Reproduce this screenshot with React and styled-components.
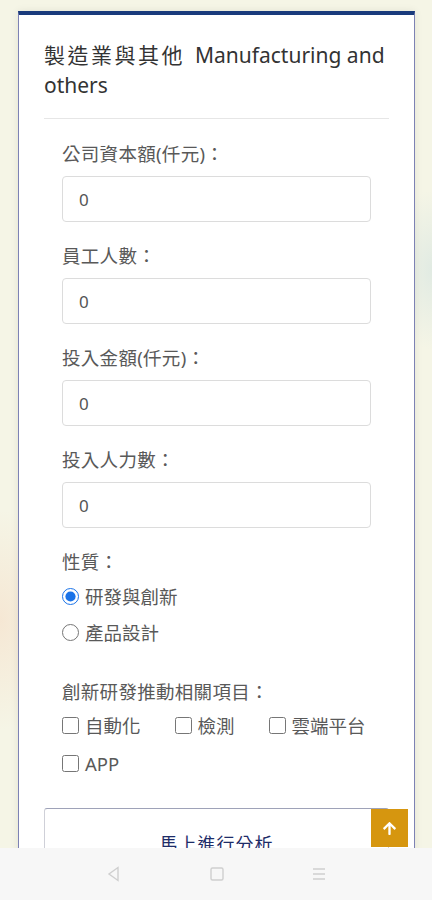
import React from "react";
import styled, { createGlobalStyle } from "styled-components";
import { FaArrowUp } from "react-icons/fa";

const GlobalStyle = createGlobalStyle`
  html, body {
    margin: 0;
    padding: 0;
  }
  body {
    background-color: #f5f5e6;
    background-image:
      radial-gradient(ellipse 60px 110px at 0px 620px, rgba(246, 222, 200, 0.6), transparent),
      radial-gradient(ellipse 40px 80px at 432px 270px, rgba(220, 232, 226, 0.8), transparent);
    font-family: "Noto Sans", "Noto Sans CJK TC", sans-serif;
  }
`;

const Page = styled.div`
  padding: 11px 17px 0 18px;
  min-height: 900px;
  box-sizing: border-box;
`;

const Card = styled.div`
  background: #fff;
  border: 1px solid #7d82b4;
  border-top: 4px solid #1a3b7c;
  box-shadow: 0 0 8px rgba(0, 0, 0, 0.08);
  padding: 25px 25px 40px;
`;

const Title = styled.h2`
  margin: 0;
  font-size: 21px;
  line-height: 30px;
  font-weight: 400;
  color: #333;
`;

const TitleZh = styled.span`
  letter-spacing: 2.5px;
  margin-right: 10px;
`;

const Divider = styled.hr`
  border: 0;
  border-top: 1px solid #e6e6e6;
  margin: 18px 0 0;
`;

const Form = styled.form`
  padding: 21px 18px 0;
  display: flex;
  flex-direction: column;
`;

const Group = styled.div`
  margin-bottom: ${(p) => p.$gap ?? 20}px;
`;

const Label = styled.div`
  font-size: 18.5px;
  line-height: 27px;
  letter-spacing: 0.3px;
  color: #595959;
`;

const Input = styled.input`
  display: block;
  box-sizing: border-box;
  width: 100%;
  height: 46px;
  margin-top: 9px;
  padding: 0 16px;
  border: 1px solid #dcdcdc;
  border-radius: 4px;
  font-family: inherit;
  font-size: 17px;
  color: #555;
  outline: none;
`;

const RadioList = styled.div`
  margin-top: 3px;
  display: flex;
  flex-direction: column;
`;

const Option = styled.label`
  display: flex;
  align-items: center;
  height: 36px;
  font-size: 18.5px;
  color: #595959;

  input {
    width: 17px;
    height: 17px;
    margin: 0 6px 0 0;
    accent-color: #1a73e8;
  }
`;

const CheckList = styled.div`
  margin-top: 2px;
  display: flex;
  flex-wrap: wrap;
  column-gap: 34px;
  row-gap: 2px;
`;

const AnalyzeButton = styled.button`
  display: block;
  width: 100%;
  height: 70px;
  margin-top: 27px;
  background: #fff;
  border: 1px solid #cfd0d8;
  border-top-color: #9ea2b8;
  border-radius: 3px;
  font-family: inherit;
  font-size: 18px;
  letter-spacing: 1px;
  color: #1e2c68;
`;

const TopButton = styled.button`
  position: fixed;
  right: 24px;
  bottom: 53px;
  width: 37px;
  height: 38px;
  border: 0;
  padding: 0;
  background: #d6960f;
  color: #fff;
  display: flex;
  align-items: center;
  justify-content: center;
  font-size: 15px;
`;

const NavBar = styled.div`
  position: fixed;
  left: 0;
  right: 0;
  bottom: 0;
  height: 52px;
  background: #f7f7f7;
  display: flex;
  align-items: center;
  justify-content: space-between;
  padding: 0 103px 0 104px;
  box-sizing: border-box;
`;

const NavIcon = styled.svg`
  width: 20px;
  height: 20px;
  fill: none;
  stroke: #cfcfcf;
  stroke-width: 1.4;
`;

const fields = ["公司資本額(仟元)：", "員工人數：", "投入金額(仟元)：", "投入人力數："];
const items = ["自動化", "檢測", "雲端平台", "APP"];

export default function App() {
  return (
    <>
      <GlobalStyle />
      <Page>
        <Card>
          <Title>
            <TitleZh>製造業與其他</TitleZh>Manufacturing and others
          </Title>
          <Divider />
          <Form onSubmit={(e) => e.preventDefault()}>
            {fields.map((f) => (
              <Group key={f}>
                <Label>{f}</Label>
                <Input defaultValue="0" />
              </Group>
            ))}
            <Group $gap={28}>
              <Label>性質：</Label>
              <RadioList>
                <Option>
                  <input type="radio" name="kind" defaultChecked />
                  研發與創新
                </Option>
                <Option>
                  <input type="radio" name="kind" />
                  產品設計
                </Option>
              </RadioList>
            </Group>
            <Group $gap={0}>
              <Label>創新研發推動相關項目：</Label>
              <CheckList>
                {items.map((i) => (
                  <Option key={i}>
                    <input type="checkbox" />
                    {i}
                  </Option>
                ))}
              </CheckList>
            </Group>
          </Form>
          <AnalyzeButton>馬上進行分析</AnalyzeButton>
        </Card>
      </Page>
      <TopButton aria-label="top">
        <FaArrowUp />
      </TopButton>
      <NavBar>
        <NavIcon viewBox="0 0 20 20">
          <path d="M14 3.5 L5 10 L14 16.5 Z" />
        </NavIcon>
        <NavIcon viewBox="0 0 20 20">
          <rect x="4" y="4" width="12" height="12" rx="1.5" />
        </NavIcon>
        <NavIcon viewBox="0 0 20 20">
          <path d="M4 5 H16 M4 10 H16 M4 15 H16" />
        </NavIcon>
      </NavBar>
    </>
  );
}
